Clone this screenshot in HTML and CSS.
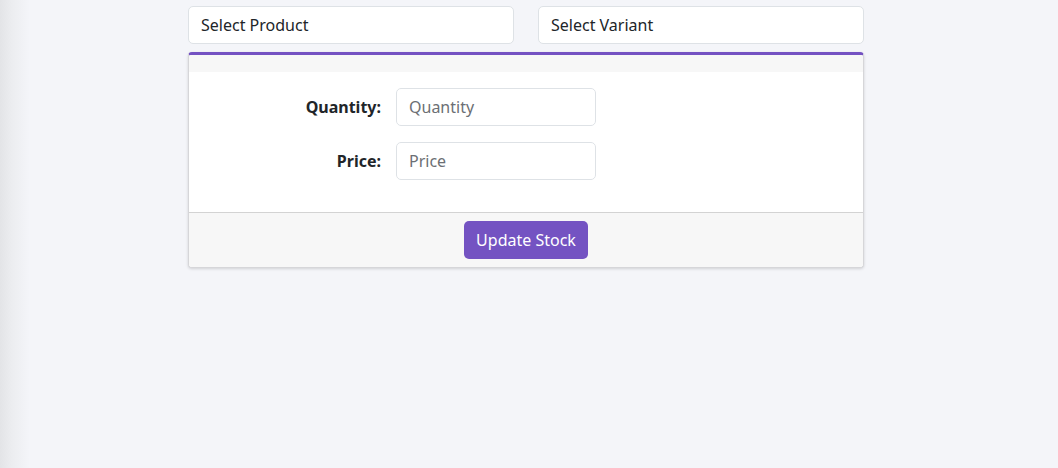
FILE: index.html
```html
<!DOCTYPE html>
<html>
<head>
<meta charset="utf-8">
<link rel="stylesheet" href="styles.css">
</head>
<body>
<div class="shell">
  <div class="edge"></div>
  <main class="main">
    <div class="selects">
      <div class="select">Select Product</div>
      <div class="select">Select Variant</div>
    </div>
    <div class="card">
      <div class="card-head"></div>
      <div class="card-body">
        <div class="row">
          <label class="lbl">Quantity:</label>
          <input class="inp" type="text" placeholder="Quantity">
        </div>
        <div class="row">
          <label class="lbl">Price:</label>
          <input class="inp" type="text" placeholder="Price">
        </div>
      </div>
      <div class="card-foot">
        <button class="btn">Update Stock</button>
      </div>
    </div>
  </main>
</div>
</body>
</html>
```
FILE: styles.css
```css
html, body {
  margin: 0;
  height: 100%;
}
body {
  background: #f4f5f9;
  font-family: "Noto Sans", "Open Sans", sans-serif;
  color: #212529;
  font-size: 16px;
}
.shell {
  display: flex;
  height: 100%;
}
.edge {
  width: 30px;
  flex: none;
  background: linear-gradient(to right, #e3e4e7 0%, #ecedf0 40%, #f4f5f9 100%);
}
.main {
  padding: 6px 0 0 158px;
  width: 676px;
}
.selects {
  display: flex;
  gap: 24px;
}
.select {
  flex: 1;
  height: 38px;
  box-sizing: border-box;
  background: #fff;
  border: 1px solid #dee2e6;
  border-radius: 5px;
  padding: 0 12px;
  display: flex;
  align-items: center;
  font-size: 16px;
  color: #212529;
}
.card {
  margin-top: 8px;
  background: #fff;
  border: 1px solid #d6d6d9;
  border-top: 3px solid #7452c2;
  border-radius: 4px;
  box-shadow: 0 1px 3px rgba(0,0,0,0.15);
  overflow: hidden;
}
.card-head {
  height: 17px;
  background: #f7f7f7;
}
.card-body {
  padding: 16px 0 32px;
  display: flex;
  flex-direction: column;
  gap: 16px;
}
.row {
  display: grid;
  grid-template-columns: 192px 200px;
  column-gap: 15px;
  align-items: center;
}
.lbl {
  text-align: right;
  font-weight: 700;
  font-size: 16px;
}
.inp {
  height: 38px;
  box-sizing: border-box;
  border: 1px solid #dee2e6;
  border-radius: 5px;
  padding: 0 12px;
  font: inherit;
  font-size: 16px;
  color: #212529;
  outline: none;
}
.inp::placeholder {
  color: #6c6f74;
}
.card-foot {
  background: #f7f7f7;
  border-top: 1px solid #d3d3d3;
  padding: 8px 0;
  display: flex;
  justify-content: center;
}
.btn {
  height: 38px;
  padding: 0 12px;
  background: #7453c2;
  color: #fff;
  border: none;
  border-radius: 5px;
  font: inherit;
  font-size: 16px;
}
```
